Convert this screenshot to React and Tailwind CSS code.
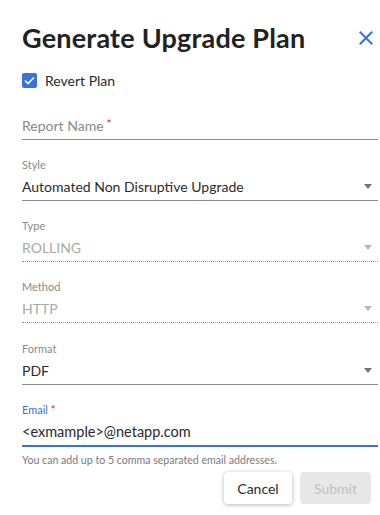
import { useState } from 'react';

// small caret for the selects
function Caret({ muted }) {
  return (
    <svg width="8" height="5" viewBox="0 0 8 5" className="shrink-0">
      <path d="M0 0h8L4 5z" fill={muted ? '#b5b5b5' : '#737373'} />
    </svg>
  );
}

function SelectField({ label, value, disabled }) {
  return (
    <div className="mt-[17px]">
      <div className="h-[16px] text-[11px] leading-[16px] text-[#8a8a8a]">{label}</div>
      <div
        className={`flex h-[28px] items-center justify-between pr-[6px] ${
          disabled ? 'border-b border-dotted border-[#9a9a9a]' : 'border-b border-[#8c8c8c]'
        }`}
      >
        <span className={`text-[14px] ${disabled ? 'text-[#a9a9a9]' : 'text-[#2b2b2b]'}`}>{value}</span>
        <Caret muted={disabled} />
      </div>
    </div>
  );
}

export default function App() {
  const [revert, setRevert] = useState(true);

  return (
    <div
      className="h-[515px] w-[380px] bg-white pl-[22px] pr-[2px] pt-[20px]"
      style={{ fontFamily: 'Lato, "Noto Sans", Arial, sans-serif' }}
    >
      {/* Header */}
      <div className="flex h-[36px] items-center justify-between">
        <h1 className="text-[27px] font-bold tracking-[0.2px] text-[#222]">Generate Upgrade Plan</h1>
        <button className="mr-[5px] text-[#3a72d8]" aria-label="Close">
          <svg width="14" height="14" viewBox="0 0 14 14">
            <path d="M1.5 1.5l11 11M12.5 1.5l-11 11" stroke="currentColor" strokeWidth="2" strokeLinecap="square" />
          </svg>
        </button>
      </div>

      {/* Revert checkbox */}
      <label className="mt-[14px] flex h-[20px] items-center gap-[8px]">
        <span
          onClick={() => setRevert(!revert)}
          className={`flex h-[15px] w-[15px] items-center justify-center rounded-[2px] ${revert ? 'bg-[#3a72d8]' : 'border border-[#888]'}`}
        >
          {revert && (
            <svg width="11" height="9" viewBox="0 0 11 9">
              <path d="M1 4.5l3 3L10 1.5" stroke="white" strokeWidth="1.6" fill="none" />
            </svg>
          )}
        </span>
        <span className="text-[14px] text-[#2b2b2b]">Revert Plan</span>
      </label>

      {/* Report name */}
      <div className="mt-[22px] flex h-[28px] items-center border-b border-[#8c8c8c]">
        <span className="text-[14px] text-[#8a8a8a]">Report Name</span>
        <span className="ml-[3px] self-start pt-[3px] text-[12px] text-[#e0201b]">*</span>
      </div>

      <SelectField label="Style" value="Automated Non Disruptive Upgrade" />
      <SelectField label="Type" value="ROLLING" disabled />
      <SelectField label="Method" value="HTTP" disabled />
      <div className="h-[1px]" />
      <SelectField label="Format" value="PDF" />

      {/* Email */}
      <div className="mt-[17px]">
        <div className="h-[16px] text-[11px] leading-[16px] text-[#3a72d8]">
          Email <span className="text-[#e0201b]">*</span>
        </div>
        <div className="flex h-[29px] items-center border-b-2 border-[#3a72d8]">
          <span className="text-[14.5px] text-[#2b2b2b]">&lt;exmample&gt;@netapp.com</span>
        </div>
      </div>
      <p className="mt-[7px] text-[10.6px] leading-[13px] text-[#7a7a7a]">
        You can add up to 5 comma separated email addresses.
      </p>

      {/* Actions */}
      <div className="mt-[5px] flex justify-end gap-[8px] pr-[7px]">
        <button className="h-[32px] w-[68px] rounded-[4px] bg-white text-[14px] text-[#2b2b2b] shadow-[0_1px_4px_rgba(0,0,0,0.3)]">
          Cancel
        </button>
        <button disabled className="h-[32px] w-[71px] rounded-[4px] bg-[#e8e8e8] text-[14px] text-[#c0c0c0]">
          Submit
        </button>
      </div>
    </div>
  );
}
